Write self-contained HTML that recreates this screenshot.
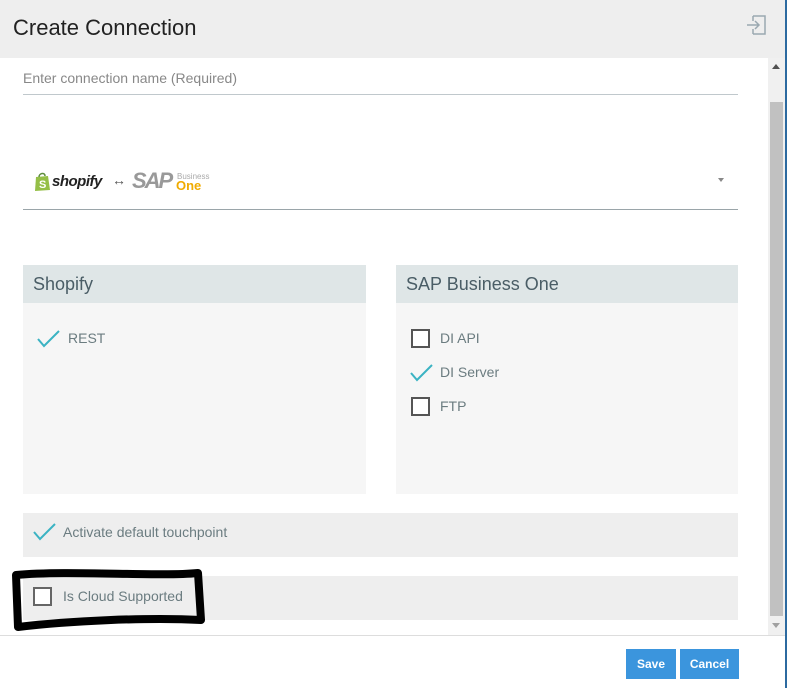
<!DOCTYPE html>
<html><head><meta charset="utf-8"><style>
*{margin:0;padding:0;box-sizing:border-box}
body{width:787px;height:688px;background:#fff;font-family:"Liberation Sans",sans-serif;position:relative;overflow:hidden}
.a{position:absolute}
.t{color:#6b7c80;font-size:14px}
.cb{position:absolute;width:19px;height:19px;border:2px solid #555;background:#fff}
</style></head><body>
<div class="a" style="left:0;top:0;width:785px;height:58px;background:#eeeeee"></div>
<div class="a" style="left:13px;top:15px;font-size:22px;color:#222">Create Connection</div>
<svg class="a" style="left:746px;top:14px" width="22" height="22" viewBox="0 0 22 22"><path d="M7 2H19V20H7M7 15v5M7 2v5" fill="none" stroke="#9aa8b0" stroke-width="1.5"/><path d="M1 11H13M9 7l4 4-4 4" fill="none" stroke="#9aa8b0" stroke-width="1.5"/></svg>
<div class="a" style="left:785px;top:0;width:2px;height:688px;background:#2c6aa0"></div>
<div class="a" style="left:768px;top:58px;width:17px;height:577px;background:#f0f0f0"></div>
<div class="a" style="left:770px;top:102px;width:13px;height:514px;background:#c1c1c1"></div>
<div class="a" style="left:772px;top:64px;width:0;height:0;border-left:4px solid transparent;border-right:4px solid transparent;border-bottom:5px solid #505050"></div>
<div class="a" style="left:772px;top:623px;width:0;height:0;border-left:4px solid transparent;border-right:4px solid transparent;border-top:5px solid #a0a0a0"></div>

<div class="a" style="left:23px;top:70px;font-size:14px;color:#888">Enter connection name (Required)</div>
<div class="a" style="left:23px;top:94px;width:715px;height:1px;background:#c0c8cc"></div>

<svg class="a" style="left:34px;top:172px" width="17" height="20" viewBox="0 0 17 20"><path d="M2 5L14 4 16 18 1 19Z" fill="#95bf47"/><path d="M5 5C5 1 11 0 11 4" fill="none" stroke="#5e8e3e" stroke-width="1.5"/><text x="5" y="16" font-size="11" font-weight="bold" fill="#fff" font-family="Liberation Sans">S</text></svg>
<div class="a" style="left:52px;top:173px;font-size:15px;font-weight:bold;font-style:italic;color:#222;letter-spacing:-0.5px">shopify</div>
<div class="a" style="left:112px;top:172px;font-size:14px;color:#555">↔</div>
<div class="a" style="left:132px;top:168px;font-size:22px;font-weight:bold;font-style:italic;color:#999;letter-spacing:-2px">SAP</div>
<div class="a" style="left:177px;top:172px;font-size:8px;color:#aaa">Business</div>
<div class="a" style="left:176px;top:178px;font-size:13px;font-weight:bold;color:#f0ab00">One</div>
<div class="a" style="left:718px;top:178px;width:0;height:0;border-left:3.5px solid transparent;border-right:3.5px solid transparent;border-top:4px solid #888"></div>
<div class="a" style="left:23px;top:209px;width:715px;height:1px;background:#9aa5a9"></div>

<div class="a" style="left:23px;top:265px;width:343px;height:229px;background:#f6f6f6"></div>
<div class="a" style="left:23px;top:265px;width:343px;height:38px;background:#dfe6e7"></div>
<div class="a" style="left:33px;top:274px;font-size:18px;color:#4a5d66">Shopify</div>
<svg class="a" style="left:37px;top:330px" width="24" height="18"><path d="M1 9l6 7L22 1" fill="none" stroke="#3bb3c3" stroke-width="2"/></svg>
<div class="a t" style="left:68px;top:330px">REST</div>

<div class="a" style="left:396px;top:265px;width:342px;height:229px;background:#f6f6f6"></div>
<div class="a" style="left:396px;top:265px;width:342px;height:38px;background:#dfe6e7"></div>
<div class="a" style="left:406px;top:274px;font-size:18px;color:#4a5d66">SAP Business One</div>
<div class="cb" style="left:411px;top:329px"></div>
<div class="a t" style="left:440px;top:330px">DI API</div>
<svg class="a" style="left:410px;top:364px" width="24" height="18"><path d="M1 9l6 7L22 1" fill="none" stroke="#3bb3c3" stroke-width="2"/></svg>
<div class="a t" style="left:440px;top:364px">DI Server</div>
<div class="cb" style="left:411px;top:397px"></div>
<div class="a t" style="left:440px;top:398px">FTP</div>

<div class="a" style="left:23px;top:513px;width:715px;height:44px;background:#eeeeee"></div>
<svg class="a" style="left:33px;top:523px" width="24" height="18"><path d="M1 9l6 7L22 1" fill="none" stroke="#3bb3c3" stroke-width="2"/></svg>
<div class="a t" style="left:63px;top:524px">Activate default touchpoint</div>
<div class="a" style="left:23px;top:576px;width:715px;height:44px;background:#eeeeee"></div>
<div class="cb" style="left:33px;top:587px;border-color:#666"></div>
<div class="a t" style="left:63px;top:588px">Is Cloud Supported</div>
<svg class="a" style="left:8px;top:565px" width="202" height="70"><path d="M8 10C60 5 150 12 190 8 L193 55 C140 52 60 56 10 62 Z" fill="none" stroke="#000" stroke-width="8" stroke-linejoin="round"/></svg>

<div class="a" style="left:0;top:635px;width:785px;height:1px;background:#ddd"></div>
<div class="a" style="left:626px;top:649px;width:50px;height:30px;background:#3b95dd;color:#fff;font-size:12px;font-weight:bold;text-align:center;line-height:30px">Save</div>
<div class="a" style="left:680px;top:649px;width:59px;height:30px;background:#3b95dd;color:#fff;font-size:12px;font-weight:bold;text-align:center;line-height:30px">Cancel</div>
</body></html>
